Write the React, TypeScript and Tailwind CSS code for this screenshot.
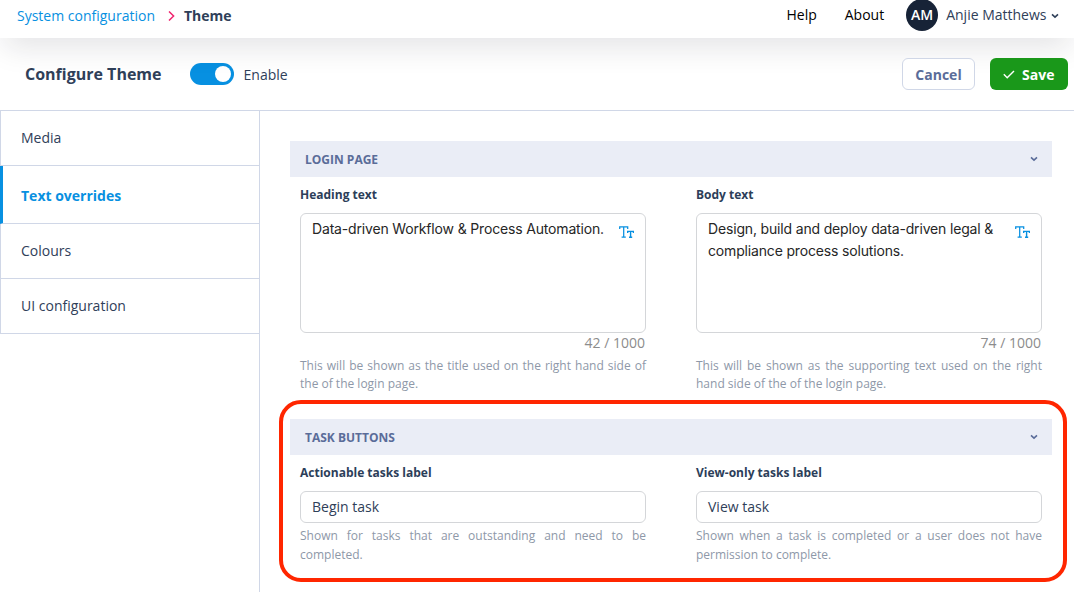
import { useState } from 'react'
import type { ReactNode } from 'react'
import clsx from 'clsx'

const tabs = [
  { name: 'Media', className: 'h-[55px]' },
  { name: 'Text overrides', className: 'h-[58px] pt-[2px]' },
  { name: 'Colours', className: 'h-[55px]' },
  { name: 'UI configuration', className: 'h-[55px]' },
]

function ChevronDown({ className }: { className?: string }) {
  return (
    <svg viewBox="0 0 8 6" className={clsx('h-[6px] w-[8px] shrink-0', className)} fill="none">
      <path d="M1 1.3 4 4.1l3-2.8" stroke="currentColor" strokeWidth="1.6" />
    </svg>
  )
}

function TextSizeIcon() {
  return (
    <svg viewBox="0 0 15 12" className="h-[12px] w-[15px]" fill="none" stroke="#0790e1">
      <path d="M.7 3V.8h8V3M4.7.8v10.4M2.6 11.2h4.2" strokeWidth="1.25" />
      <path d="M8.7 7V5.4h5.7V7M11.6 5.4v5.8M10 11.2h3.2" strokeWidth="1.4" />
    </svg>
  )
}

function Section({ title, children }: { title: string; children: ReactNode }) {
  return (
    <section>
      <div className="flex h-9 items-center justify-between bg-[#eaedf6] pr-[14.5px] pl-[15px] text-[#5a6c99]">
        <h2 className="pt-[2px] text-xs font-bold">{title}</h2>
        <ChevronDown />
      </div>
      <div className="grid grid-cols-2 gap-[50px] px-[10px]">{children}</div>
    </section>
  )
}

function Field({ label, children }: { label: string; children: ReactNode }) {
  return (
    <div className="pt-[9px]">
      <label className="block h-[27px] text-xs leading-[18px] font-bold text-[#2c3e59]">
        {label}
      </label>
      {children}
    </div>
  )
}

function TextArea({ text, count, help }: { text: string; count: number; help: string }) {
  return (
    <>
      <div className="flex h-[120px] justify-between rounded-[6px] border border-[#d4d6d9] pt-1 pr-[11px] pl-[11px]">
        <p className="w-[296px] font-[Inter,sans-serif] text-sm leading-[22px] tracking-[-0.165px] text-[#262626]">
          {text}
        </p>
        <div className="pt-2">
          <TextSizeIcon />
        </div>
      </div>
      <div className="h-6 pr-px text-right text-sm leading-[19px] text-[#8c8c8c]">
        {count} / 1000
      </div>
      <p className="text-justify text-xs leading-[18px] text-[#8e98a8]">{help}</p>
    </>
  )
}

function TextInput({ value, help }: { value: string; help: string }) {
  return (
    <>
      <div className="flex h-8 items-center rounded-[6px] border border-[#d4d6d9] px-[11px] text-sm text-[#2f4059]">
        {value}
      </div>
      <p className="mt-[3px] text-justify text-xs leading-[19px] text-[#8e98a8]">{help}</p>
    </>
  )
}

export default function App() {
  const [enabled, setEnabled] = useState(true)
  const [activeTab, setActiveTab] = useState('Text overrides')

  return (
    <div className="h-[592px] overflow-hidden bg-white font-['Open_Sans',sans-serif] text-sm text-[#2f4059]">
      <div className="flex h-full w-[1074px] flex-col overflow-hidden">
        {/* Top bar */}
        <header className="relative flex h-[38px] shrink-0 items-start justify-between bg-white shadow-[0_12px_30px_-4px_rgba(20,25,35,0.13)]">
          <nav className="flex items-center pt-[6px] pl-[17px]">
            <a className="text-[#0790e1]">System configuration</a>
            <svg viewBox="0 0 7 10" className="mr-[9px] ml-[13px] h-[10px] w-[7px]" fill="none">
              <path d="m1 .5 4.6 4.5L1 9.5" stroke="#f0246e" strokeWidth="1.5" />
            </svg>
            <span className="font-bold">Theme</span>
          </nav>
          <div className="flex h-[30px] items-center pr-[15.5px]">
            <a className="mr-7 text-black">Help</a>
            <a className="mr-[22px] text-black">About</a>
            <div className="mr-2 flex size-8 items-center justify-center rounded-full bg-[#172337] text-sm font-semibold text-white">
              AM
            </div>
            <span>Anjie Matthews</span>
            <ChevronDown className="mt-[2px] ml-1" />
          </div>
        </header>

        {/* Page title and actions */}
        <div className="flex h-[73px] shrink-0 items-center border-b border-[#d0d7e7] pr-[6px] pl-[25px]">
          <h1 className="text-base font-bold">Configure Theme</h1>
          <button
            onClick={() => setEnabled(!enabled)}
            className={clsx(
              'ml-[28px] flex h-[22px] w-11 items-center rounded-full px-[3px]',
              enabled ? 'justify-end bg-[#0790e1]' : 'bg-gray-300'
            )}
          >
            <span className="size-4 rounded-full bg-white" />
          </button>
          <span className="mt-[2px] ml-[10px]">Enable</span>
          <div className="relative ml-auto flex gap-[15px] font-bold">
            <button className="h-8 w-[73px] rounded-[6px] border border-[#d0d7e7] bg-white pt-[2px] text-[#5a6c99]">
              Cancel
            </button>
            <button className="flex h-8 w-[78px] items-center rounded-[6px] bg-[#1a981a] pl-[13px] text-white">
              <svg viewBox="0 0 12 9" className="mr-[7px] h-[9px] w-[12px]" fill="none">
                <path d="m.8 4.3 3.4 3.4L11 1" stroke="white" strokeWidth="1.4" />
              </svg>
              <span className="pt-[2px]">Save</span>
            </button>
          </div>
        </div>

        <div className="flex min-h-0 flex-1">
          {/* Side tabs */}
          <aside className="w-[260px] shrink-0 border-r border-[#d0d7e7]">
            {tabs.map((tab) => (
              <button
                key={tab.name}
                onClick={() => setActiveTab(tab.name)}
                className={clsx(
                  'flex w-full items-center border-b border-b-[#d0d7e7] text-left',
                  tab.className,
                  activeTab === tab.name
                    ? 'border-l-3 border-l-[#0790e1] pl-[18px] font-bold text-[#0790e1]'
                    : 'border-l border-l-[#d0d7e7] pl-5'
                )}
              >
                {tab.name}
              </button>
            ))}
          </aside>

          <main className="flex-1 pt-[30px] pr-[22px] pl-[30px]">
            <Section title="LOGIN PAGE">
              <Field label="Heading text">
                <TextArea
                  text="Data-driven Workflow & Process Automation."
                  count={42}
                  help="This will be shown as the title used on the right hand side of the of the login page."
                />
              </Field>
              <Field label="Body text">
                <TextArea
                  text="Design, build and deploy data-driven legal & compliance process solutions."
                  count={74}
                  help="This will be shown as the supporting text used on the right hand side of the of the login page."
                />
              </Field>
            </Section>

            {/* Highlighted section */}
            <div className="relative mt-[26px]">
              <div className="pointer-events-none absolute -top-[19px] -right-[15px] -left-[11px] h-[182px] rounded-[22px] border-4 border-[#ff2600]" />
              <Section title="TASK BUTTONS">
                <Field label="Actionable tasks label">
                  <TextInput
                    value="Begin task"
                    help="Shown for tasks that are outstanding and need to be completed."
                  />
                </Field>
                <Field label="View-only tasks label">
                  <TextInput
                    value="View task"
                    help="Shown when a task is completed or a user does not have permission to complete."
                  />
                </Field>
              </Section>
            </div>
          </main>
        </div>
      </div>
    </div>
  )
}
